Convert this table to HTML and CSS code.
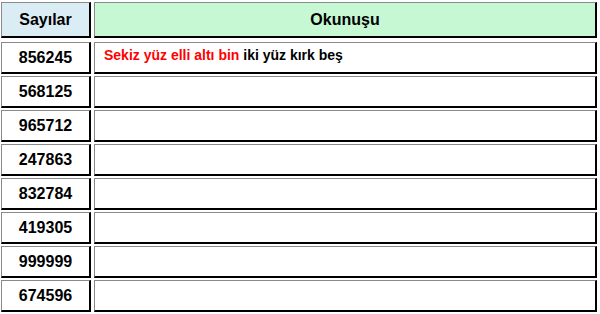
FILE: index.html
```html
<!DOCTYPE html>
<html lang="tr">
<head>
<meta charset="utf-8">
<link rel="stylesheet" href="styles.css">
</head>
<body>
<div class="table">
  <div class="cell head num">Sayılar</div>
  <div class="cell head text-head">Okunuşu</div>

  <div class="cell num">856245</div>
  <div class="cell text"><p class="line"><span class="red">Sekiz yüz elli altı bin</span> iki yüz kırk beş</p></div>

  <div class="cell num">568125</div>
  <div class="cell text"></div>

  <div class="cell num">965712</div>
  <div class="cell text"></div>

  <div class="cell num">247863</div>
  <div class="cell text"></div>

  <div class="cell num">832784</div>
  <div class="cell text"></div>

  <div class="cell num">419305</div>
  <div class="cell text"></div>

  <div class="cell num">999999</div>
  <div class="cell text"></div>

  <div class="cell num">674596</div>
  <div class="cell text"></div>
</div>
</body>
</html>
```
FILE: styles.css
```css
html, body {
  margin: 0;
  padding: 0;
  background: #ffffff;
}
body {
  padding: 2px 3px 0 1px;
  font-family: "Comic Sans MS", "Liberation Sans", Arial, sans-serif;
}
.table {
  display: grid;
  grid-template-columns: 90px 503px;
  grid-template-rows: 38px repeat(8, 32px);
  column-gap: 3px;
  row-gap: 2px;
}
.cell {
  box-sizing: border-box;
  border-top: 1px solid #8a8a8a;
  border-left: 1px solid #8a8a8a;
  border-right: 2px solid #000000;
  border-bottom: 2px solid #000000;
  background: #ffffff;
  display: flex;
  align-items: center;
  color: #000000;
}
.num {
  justify-content: center;
  font-weight: bold;
  font-size: 16px;
}
.head {
  height: 36px;
  align-self: start;
}
.head.num {
  background: #daedf5;
}
.text-head {
  background: #c6f8d4;
  justify-content: center;
  font-weight: bold;
  font-size: 16px;
}
.text {
  padding-left: 9px;
  align-items: flex-start;
  padding-top: 4px;
}
.line {
  margin: 0;
  font-weight: bold;
  font-size: 14px;
  line-height: 16px;
}
.red {
  color: #ff0000;
}
```
